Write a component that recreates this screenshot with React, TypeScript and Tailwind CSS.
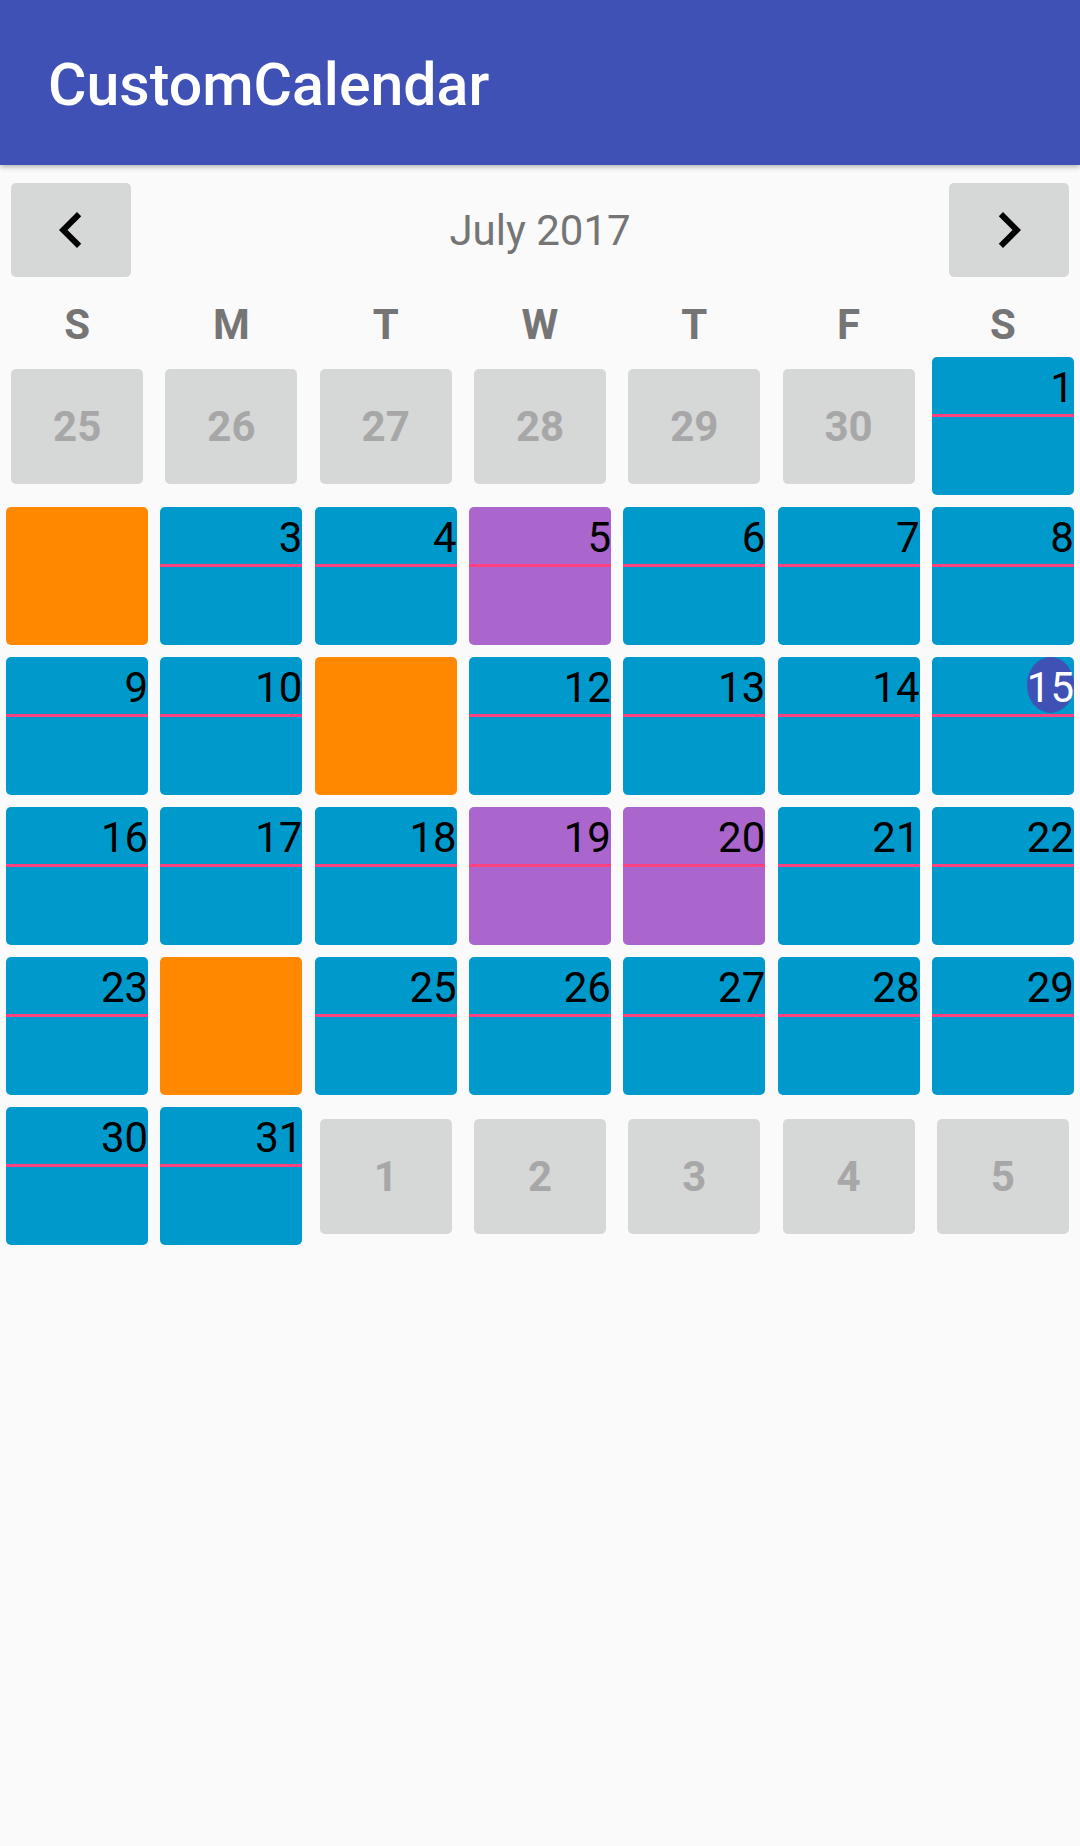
import React from "react";

type Kind = "prev" | "blue" | "purple" | "orange" | "next" | "today";
type Cell = { d: number; k: Kind };

const rows: Cell[][] = [
  [
    { d: 25, k: "prev" },
    { d: 26, k: "prev" },
    { d: 27, k: "prev" },
    { d: 28, k: "prev" },
    { d: 29, k: "prev" },
    { d: 30, k: "prev" },
    { d: 1, k: "blue" },
  ],
  [
    { d: 2, k: "orange" },
    { d: 3, k: "blue" },
    { d: 4, k: "blue" },
    { d: 5, k: "purple" },
    { d: 6, k: "blue" },
    { d: 7, k: "blue" },
    { d: 8, k: "blue" },
  ],
  [
    { d: 9, k: "blue" },
    { d: 10, k: "blue" },
    { d: 11, k: "orange" },
    { d: 12, k: "blue" },
    { d: 13, k: "blue" },
    { d: 14, k: "blue" },
    { d: 15, k: "today" },
  ],
  [
    { d: 16, k: "blue" },
    { d: 17, k: "blue" },
    { d: 18, k: "blue" },
    { d: 19, k: "purple" },
    { d: 20, k: "purple" },
    { d: 21, k: "blue" },
    { d: 22, k: "blue" },
  ],
  [
    { d: 23, k: "blue" },
    { d: 24, k: "orange" },
    { d: 25, k: "blue" },
    { d: 26, k: "blue" },
    { d: 27, k: "blue" },
    { d: 28, k: "blue" },
    { d: 29, k: "blue" },
  ],
  [
    { d: 30, k: "blue" },
    { d: 31, k: "blue" },
    { d: 1, k: "next" },
    { d: 2, k: "next" },
    { d: 3, k: "next" },
    { d: 4, k: "next" },
    { d: 5, k: "next" },
  ],
];

function Chevron({ dir }: { dir: "left" | "right" }) {
  return (
    <svg width="72" height="72" viewBox="0 0 24 24" fill="#000">
      {dir === "left" ? (
        <path d="M15.41 7.41L14 6l-6 6 6 6 1.41-1.41L10.83 12z" />
      ) : (
        <path d="M10 6L8.59 7.41 13.17 12l-4.58 4.59L10 18l6-6z" />
      )}
    </svg>
  );
}

function DayCell({ c }: { c: Cell }) {
  if (c.k === "prev" || c.k === "next") {
    return (
      <div className="h-[150px] flex items-center justify-center">
        <div className="w-[132px] h-[115px] rounded-[5px] bg-[#d6d7d7] flex items-center justify-center text-[42px] font-bold text-[#a7a7a7]">
          {c.d}
        </div>
      </div>
    );
  }
  if (c.k === "orange") {
    return (
      <div className="h-[150px] flex items-center justify-center">
        <div className="w-[142px] h-[138px] rounded-[5px] bg-[#ff8800]" />
      </div>
    );
  }
  const bg = c.k === "purple" ? "bg-[#aa66cc]" : "bg-[#0099cc]";
  return (
    <div className="h-[150px] flex items-center justify-center">
      <div className={`w-[142px] h-[138px] rounded-[5px] overflow-hidden flex flex-col ${bg}`}>
        <div className="h-[57px] flex justify-end items-start">
          {c.k === "today" ? (
            <span className="w-[47px] h-[56px] rounded-[50%] bg-[#3f51b5] text-white text-[42px] leading-[61px] text-center">
              {c.d}
            </span>
          ) : (
            <span className="text-black text-[42px] leading-[61px] h-[57px]">{c.d}</span>
          )}
        </div>
        <div className="h-[3px] bg-[#ff4081]" />
      </div>
    </div>
  );
}

export default function App() {
  return (
    <div className="w-[1080px] h-[1846px] bg-[#fafafa] font-['Roboto','Noto_Sans',sans-serif] overflow-hidden">
      <div className="relative z-10 h-[165px] bg-[#3f51b5] shadow-[0_2px_5px_rgba(0,0,0,0.28)] pl-[48px] pt-[50px]">
        <div className="text-white text-[59px] font-medium leading-[70px]">CustomCalendar</div>
      </div>
      <div className="flex items-center px-[11px] pt-[18px]">
        <div className="w-[120px] h-[94px] rounded-[5px] bg-[#d6d7d7] flex items-center justify-center">
          <Chevron dir="left" />
        </div>
        <div className="flex-1 text-center text-[42px] text-[#757575]">July 2017</div>
        <div className="w-[120px] h-[94px] rounded-[5px] bg-[#d6d7d7] flex items-center justify-center">
          <Chevron dir="right" />
        </div>
      </div>
      <div className="grid grid-cols-7 mt-[27px] h-[42px] leading-[42px] text-center font-bold text-[42px] text-[#757575]">
        {["S", "M", "T", "W", "T", "F", "S"].map((w, i) => (
          <div key={i}>{w}</div>
        ))}
      </div>
      <div className="grid grid-cols-7 mt-[5px]">
        {rows.flat().map((c, i) => (
          <DayCell key={i} c={c} />
        ))}
      </div>
    </div>
  );
}
